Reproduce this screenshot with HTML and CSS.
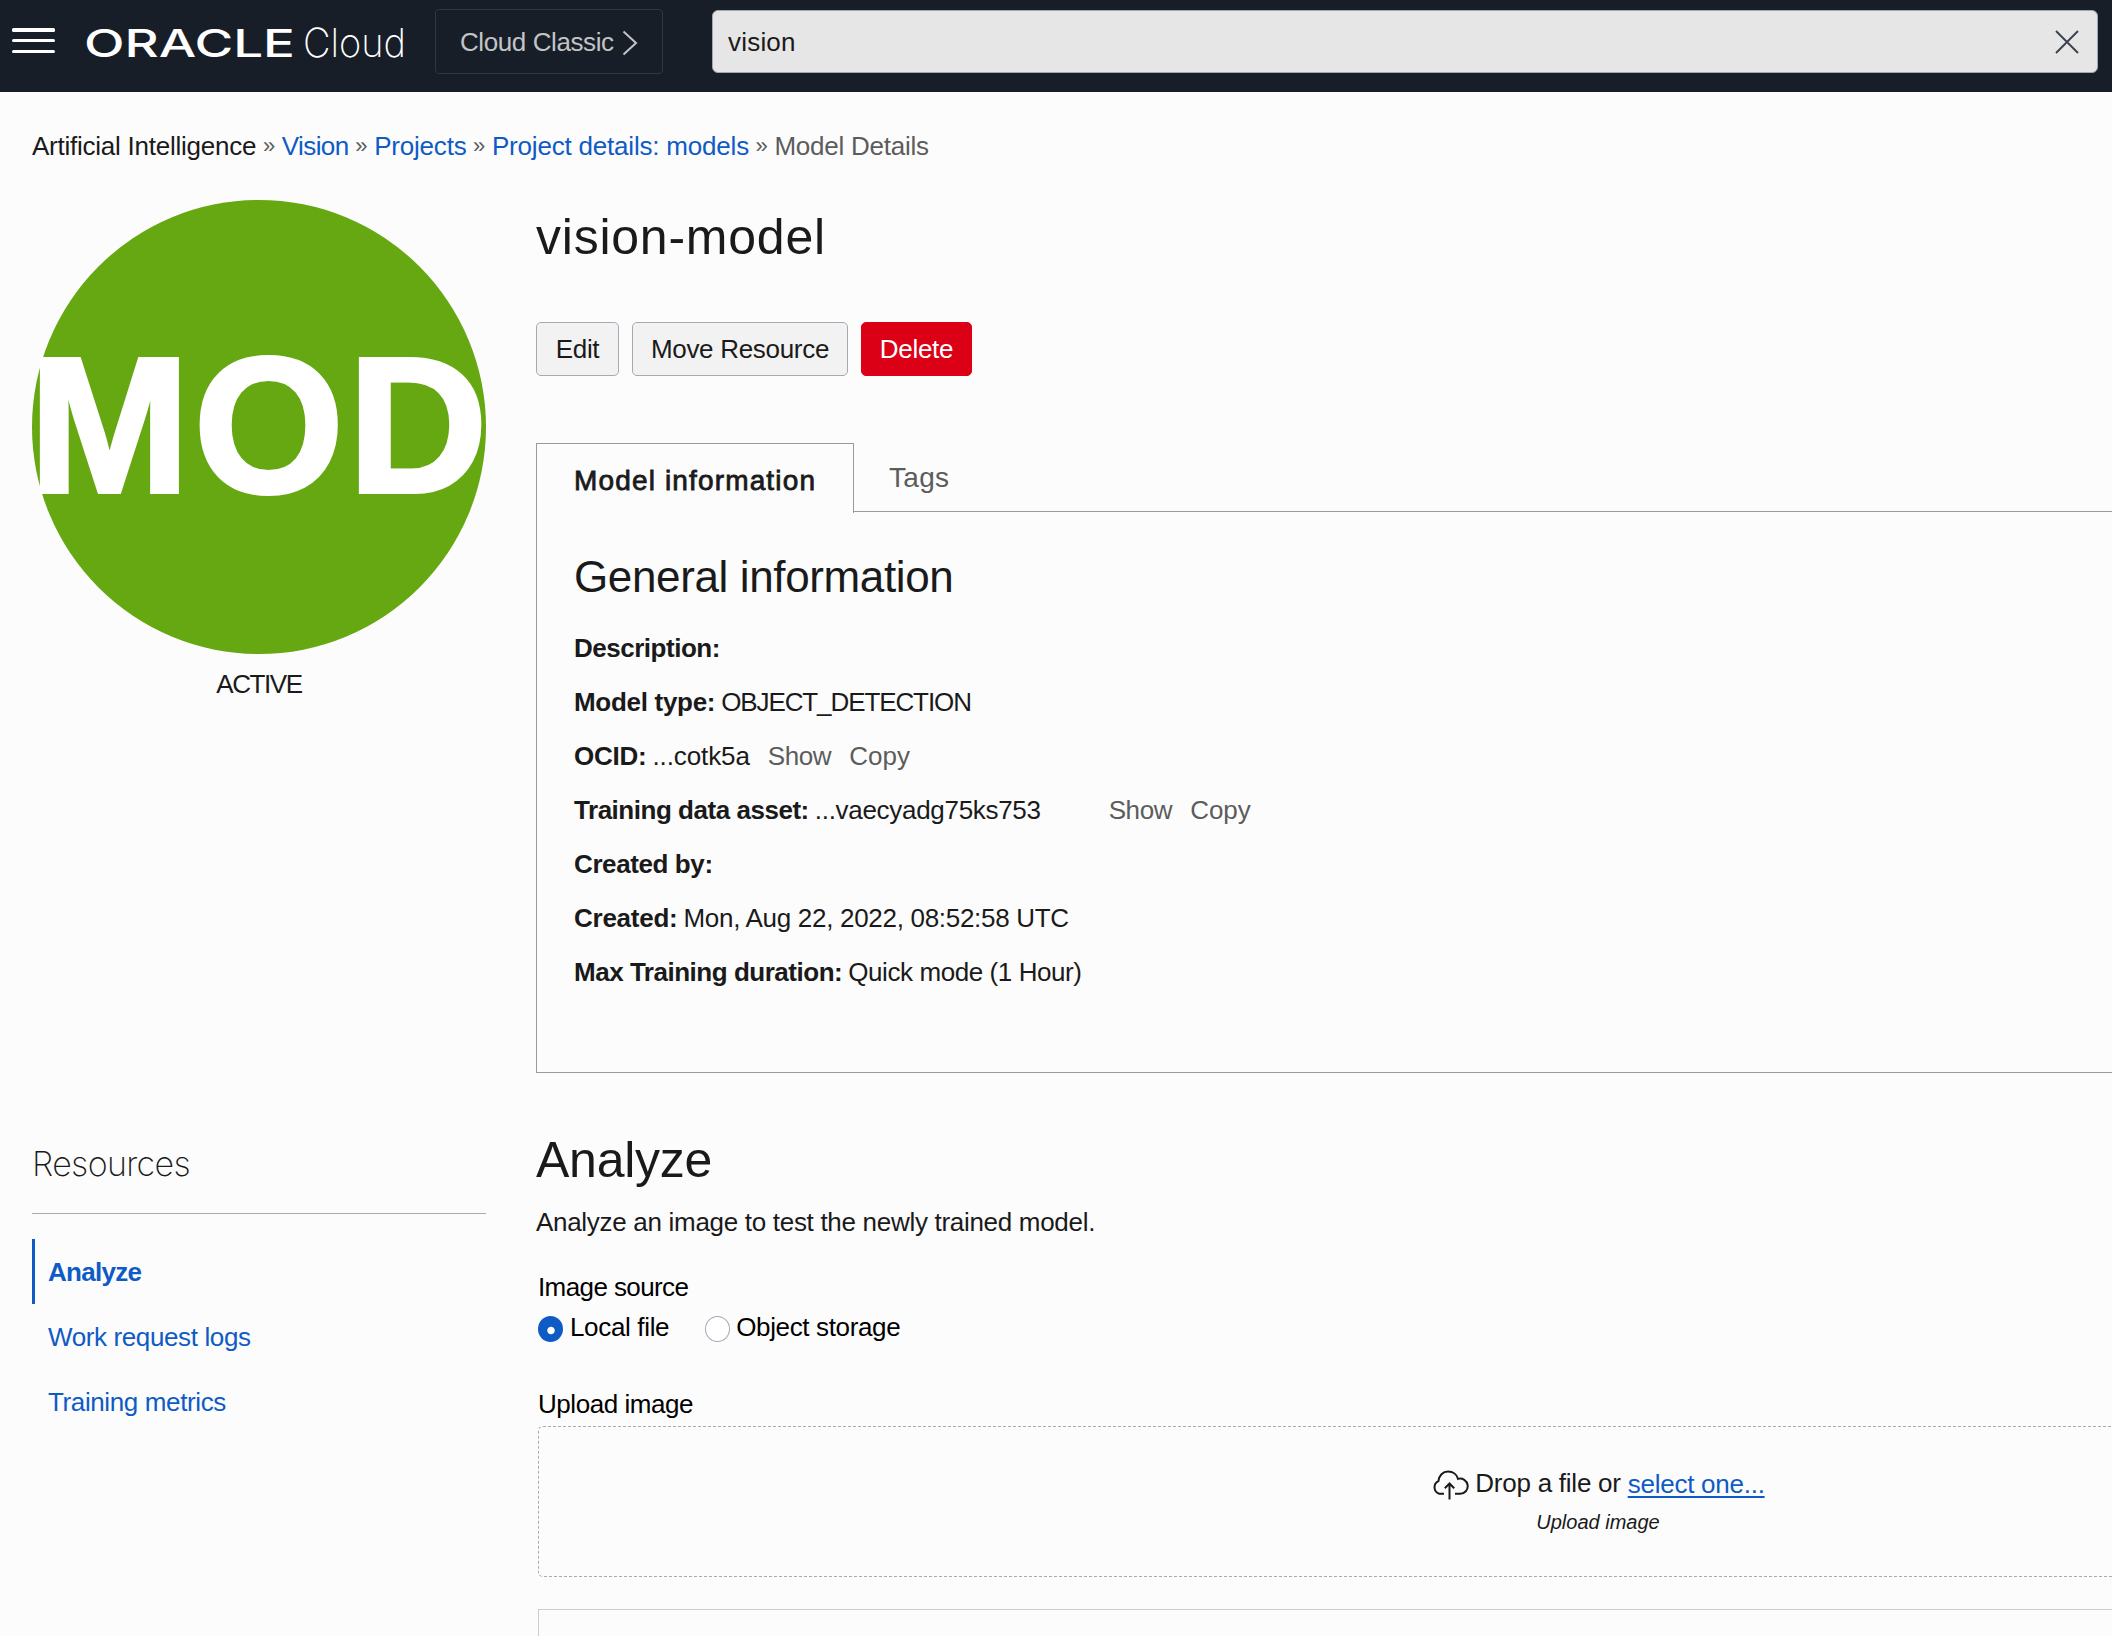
FILE: index.html
```html
<!DOCTYPE html>
<html lang="en">
<head>
<meta charset="utf-8">
<title>Model Details | Oracle Cloud</title>
<link rel="stylesheet" href="styles.css">
</head>
<body>
<header class="topbar">
  <svg class="menu" width="43" height="25" viewBox="0 0 43 25" fill="#fff">
    <rect x="0" y="0" width="43" height="4" rx="1.5"/>
    <rect x="0" y="11" width="43" height="3" rx="1.5"/>
    <rect x="0" y="22" width="43" height="3" rx="1.5"/>
  </svg>
  <svg class="logo" width="322" height="44" viewBox="0 0 322 44" fill="#fff">
    <text class="logo-oracle" x="-2" y="36.500" textLength="211" lengthAdjust="spacingAndGlyphs">ORACLE</text>
    <text class="logo-cloud" x="217" y="36.500" textLength="103" lengthAdjust="spacingAndGlyphs">Cloud</text>
  </svg>
  <a class="classic">
    <span>Cloud Classic</span>
    <svg width="17" height="26" viewBox="0 0 17 26" fill="none" stroke="#c3c4c6" stroke-width="2"><path d="M1.5 1.5 14 13 1.5 24.5"/></svg>
  </a>
  <div class="search">
    <span>vision</span>
    <svg width="24" height="24" viewBox="0 0 24 24" fill="none" stroke="#3a424c" stroke-width="1.9"><path d="M1 1 23 23M23 1 1 23"/></svg>
  </div>
</header>

<nav class="crumbs">
  <span class="crumb-root">Artificial Intelligence</span><i>»</i><a class="crumb-vision">Vision</a><i>»</i><a>Projects</a><i>»</i><a>Project details: models</a><i>»</i><span class="crumb-current">Model Details</span>
</nav>

<div class="layout">
  <aside class="side">
    <div class="badge"><span>MOD</span></div>
    <div class="status">ACTIVE</div>
    <h3 class="side-title">Resources</h3>
    <ul class="side-nav">
      <li class="selected">Analyze</li>
      <li>Work request logs</li>
      <li>Training metrics</li>
    </ul>
  </aside>

  <main class="main">
    <h1 class="title">vision-model</h1>
    <div class="actions">
      <button class="btn btn-edit">Edit</button>
      <button class="btn btn-move">Move Resource</button>
      <button class="btn btn-delete">Delete</button>
    </div>

    <div class="tabs">
      <div class="tab tab-active">Model information</div>
      <div class="tab tab-rest">Tags</div>
    </div>
    <section class="panel">
      <h2 class="panel-title">General information</h2>
      <div class="row"><b class="k-desc">Description:</b></div>
      <div class="row"><b class="k-type">Model type:</b><span class="v-type">OBJECT_DETECTION</span></div>
      <div class="row"><b class="k-ocid">OCID:</b><span class="v-ocid">...cotk5a</span><a class="show">Show</a><a class="copy">Copy</a></div>
      <div class="row"><b class="k-asset">Training data asset:</b><span>...vaecyadg75ks753</span><a class="show show-far">Show</a><a class="copy">Copy</a></div>
      <div class="row"><b class="k-by">Created by:</b></div>
      <div class="row"><b class="k-created">Created:</b><span>Mon, Aug 22, 2022, 08:52:58 UTC</span></div>
      <div class="row"><b class="k-max">Max Training duration:</b><span class="v-max">Quick mode (1 Hour)</span></div>
    </section>

    <section class="analyze">
      <h2 class="analyze-title">Analyze</h2>
      <p class="analyze-text">Analyze an image to test the newly trained model.</p>
      <div class="form">
        <div class="label-source">Image source</div>
        <div class="radios">
          <span class="radio radio-on"></span><span class="opt-local">Local file</span>
          <span class="radio radio-off"></span><span class="opt-object">Object storage</span>
        </div>
        <div class="label-upload">Upload image</div>
        <div class="drop">
          <div class="drop-line">
            <svg width="38" height="30" viewBox="0 0 38 30" fill="none" stroke="#1a1a1a" stroke-width="2">
              <path d="M13 23.8H8.2A6.8 6.8 0 0 1 7.4 11.2C8 5.6 11.8 1.6 17 1.6c4.700 0 9 2.600 10 7.300a7.600 7.600 0 1 1 2 14.900H24"/>
              <path d="M18.500 29.500V14M13.800 18.200 18.500 13.500 23.200 18.200"/>
            </svg>
            <span class="drop-text">Drop a file or</span>
            <a class="drop-link">select one...</a>
          </div>
          <div class="drop-hint">Upload image</div>
        </div>
        <div class="result"></div>
      </div>
    </section>
  </main>
</div>
</body>
</html>
```
FILE: styles.css
```css
* { box-sizing: border-box; margin: 0; padding: 0; }
html, body { height: 1636px; overflow: hidden; }
body {
  background: #fcfcfc;
  color: #1a1a1a;
  font: 26px/36px "Liberation Sans", Arial, sans-serif;
  letter-spacing: -0.3px;
  white-space: nowrap;
}
ul { list-style: none; }
h1, h2, h3 { font-weight: 400; }

/* Top bar */
.topbar { height: 92px; background: #171e28; display: flex; align-items: flex-start; padding-left: 12px; }
.menu { margin-top: 28px; }
.logo { margin: 20px 0 0 31px; overflow: visible; }
.logo-oracle { font: 500 38px "Inter", sans-serif; letter-spacing: 0; }
.logo-cloud { font: 200 40px "Inter", sans-serif; letter-spacing: 0; }
.classic {
  margin: 9px 0 0 27px; width: 228px; height: 65px; padding: 0 24px;
  border: 1px solid #31363f; border-radius: 4px;
  color: #c3c4c6; letter-spacing: -0.41px;
  display: flex; align-items: center; gap: 8px;
}
.classic svg { flex: none; margin-top: 2px; }
.search {
  margin: 10px 0 0 49px; width: 1386px; height: 63px; padding: 0 18px 0 15px;
  background: #e6e6e6; border: 1px solid #a2a6b4; border-radius: 6px;
  display: flex; align-items: center; justify-content: space-between;
  letter-spacing: 0.2px;
}

/* Breadcrumb */
.crumbs { display: flex; padding: 36px 0 0 32px; height: 108px; color: #5c5c5c; }
.crumbs a { color: #0f5bc5; letter-spacing: -0.2px; }
.crumbs i { font-style: normal; font-size: 22px; width: 25.5px; text-align: center; letter-spacing: 0; }
.crumb-root { color: #1a1a1a; letter-spacing: -0.24px; }
.crumbs .crumb-vision { letter-spacing: -0.58px; }
.crumb-current { letter-spacing: -0.25px; }

.layout { display: grid; grid-template-columns: 454px 1fr; column-gap: 50px; padding-left: 32px; }

/* Left column */
.badge {
  width: 454px; height: 454px; border-radius: 50%; background: #66a812; color: #fff;
  font: bold 193px/450px "Liberation Sans", Arial, sans-serif; letter-spacing: 4px;
  -webkit-text-stroke: 4px #fff;
}
.badge span { margin-left: -3px; }
.status { margin-top: 12px; text-align: center; letter-spacing: -1.4px; }
.side-title {
  margin-top: 439px; height: 73px; border-bottom: 1px solid #a3abb5;
  font: 200 34px/46px "Inter", sans-serif; letter-spacing: -0.65px; color: #1a1a1a;
}
.side-nav { margin-top: 25px; color: #0f5bc5; }
.side-nav li { height: 65px; line-height: 67px; padding-left: 16px; letter-spacing: -0.38px; }
.side-nav .selected { border-left: 3px solid #0f5bc5; padding-left: 13px; font-weight: 700; letter-spacing: -0.7px; }

/* Main column */
.title { font-size: 50px; line-height: 60px; margin-top: 7px; letter-spacing: 0.77px; }
.actions { display: flex; margin-top: 55px; }
.btn {
  height: 54px; border: 1px solid #a3abb5; border-radius: 5px; background: #f2f2f2; color: #1a1a1a;
  font: 26px/52px "Liberation Sans", Arial, sans-serif; letter-spacing: -0.3px; margin-right: 13px;
}
.btn-edit { width: 83px; }
.btn-move { width: 216px; }
.btn-delete { width: 111px; border-color: #dc0016; background: #dc0016; color: #fff; }

.tabs { display: flex; margin-top: 67px; height: 69px; }
.tab { font-size: 28px; }
.tab-active {
  width: 318px; height: 70px; padding-left: 37px; line-height: 74px;
  border: 1px solid #9a9a9a; border-bottom: 0; letter-spacing: 1.15px;
  -webkit-text-stroke: 0.8px #1a1a1a;
}
.tab-rest { flex: 1; padding-left: 35px; line-height: 70px; color: #5c5c5c; border-bottom: 1px solid #9a9a9a; letter-spacing: 0.3px; }
.panel { height: 561px; padding: 35px 0 0 37px; border: solid #9a9a9a; border-width: 0 0 1px 1px; }
.panel-title { font-size: 44px; line-height: 60px; letter-spacing: -0.37px; margin-bottom: 14px; }
.row { display: flex; height: 54px; line-height: 54px; }
.row b { margin-right: 6px; letter-spacing: -0.24px; }
.row .k-desc { letter-spacing: -0.48px; }
.row .k-type { letter-spacing: -0.3px; }
.row .k-ocid { letter-spacing: -0.25px; }
.row .k-asset { letter-spacing: -0.47px; }
.row .k-by { letter-spacing: -0.4px; }
.row .k-created { letter-spacing: -0.25px; }
.row .k-max { letter-spacing: -0.48px; }
.v-type { letter-spacing: -1.1px; }
.v-ocid { letter-spacing: -0.1px; }
.v-max { letter-spacing: -0.42px; }
.show { margin-left: 18px; color: #5c5c5c; letter-spacing: -0.4px; }
.show-far { margin-left: 68px; }
.copy { margin-left: 18px; color: #5c5c5c; letter-spacing: 0; }

.analyze-title { margin-top: 57px; font-size: 50px; line-height: 60px; letter-spacing: -0.25px; }
.analyze-text { margin-top: 14px; letter-spacing: -0.3px; }
.form { margin: 29px 0 0 2px; color: #000; }
.label-source { letter-spacing: -0.6px; }
.label-upload { letter-spacing: -0.45px; margin: 41px 0 4px; }
.radios { display: flex; align-items: center; margin-top: 4px; }
.radio { width: 25px; height: 26px; border-radius: 50%; margin-top: 3px; }
.radio-on { background: radial-gradient(circle at 13px 14.5px, #fff 3.2px, #0f5bc5 4.2px); }
.radio-off { border: 1px solid #a3abb5; background: #fff; margin-left: 36px; }
.opt-local { margin-left: 7px; letter-spacing: -0.34px; }
.opt-object { margin-left: 6px; letter-spacing: -0.36px; }

.drop {
  height: 151px; color: #1a1a1a; padding: 37px 0 0 545px;
  border: 1px dashed #a3abb5; border-right: 0; border-radius: 5px 0 0 5px;
}
.drop-line { display: flex; justify-content: center; height: 40px; }
.drop-line svg { margin: 6px 6px 0 0; flex: none; }
.drop-text { line-height: 38px; letter-spacing: -0.25px; margin-right: 7px; }
.drop-link { line-height: 40px; color: #0f5bc5; letter-spacing: -0.25px; text-decoration: underline; text-decoration-thickness: 2px; text-underline-offset: 3px; }
.drop-hint { text-align: center; font: italic 20px/36px "Liberation Sans", Arial, sans-serif; letter-spacing: 0; }
.result { margin-top: 32px; height: 27px; border: 1px solid #c9cdd6; border-width: 1px 0 0 1px; }
```
